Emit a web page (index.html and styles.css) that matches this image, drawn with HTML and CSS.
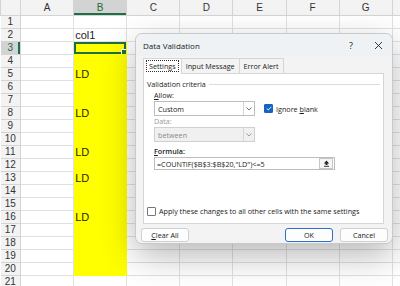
FILE: index.html
```html
<!DOCTYPE html>
<html lang="en">
<head>
  <meta charset="UTF-8">
  <title>Data Validation</title>
  <link rel="stylesheet" href="styles.css">
</head>
<body>
  <div class="sheet">
    <table class="grid" id="grid">
      <thead>
        <tr>
          <th class="corner"></th>
          <th>A</th><th class="sel">B</th><th>C</th><th>D</th><th>E</th><th>F</th><th>G</th><th></th>
        </tr>
      </thead>
      <tbody id="rows"></tbody>
    </table>

    <div class="dialog">
      <div class="titlebar">
        <span class="title">Data Validation</span>
        <span class="help">?</span>
        <span class="close"><svg width="9" height="9" viewBox="0 0 9 9"><path d="M1 1 L8 8 M8 1 L1 8" stroke="#222" stroke-width="0.9"/></svg></span>
      </div>

      <div class="tabs">
        <div class="tab active"><span class="focus">Settings</span></div>
        <div class="tab">Input Message</div>
        <div class="tab">Error Alert</div>
      </div>

      <div class="panel">
        <div class="group">
          <span>Validation criteria</span>
          <div class="rule"></div>
        </div>

        <div class="field">
          <label><u>A</u>llow:</label>
          <div class="row">
            <div class="select">
              <span>Custom</span>
              <span class="arrow"><svg width="6" height="4" viewBox="0 0 6 4"><path d="M0.5 0.5 L3 3 L5.5 0.5" fill="none" stroke="#555" stroke-width="0.8"/></svg></span>
            </div>
            <div class="check on"><svg width="6" height="5" viewBox="0 0 6 5"><path d="M0.7 2.6 L2.3 4 L5.3 0.8" fill="none" stroke="#fff" stroke-width="0.9"/></svg></div>
            <span class="checklabel">Ignore <u>b</u>lank</span>
          </div>
        </div>

        <div class="field">
          <label class="disabled">Data:</label>
          <div class="select disabled">
            <span>between</span>
            <span class="arrow"><svg width="6" height="4" viewBox="0 0 6 4"><path d="M0.5 0.5 L3 3 L5.5 0.5" fill="none" stroke="#888" stroke-width="0.8"/></svg></span>
          </div>
        </div>

        <div class="field">
          <label class="strong"><u>F</u>ormula:</label>
          <div class="input">
            <span>=COUNTIF($B$3:$B$20,"LD")&lt;=5</span>
            <span class="pick"><svg width="7" height="7" viewBox="0 0 7 7"><path d="M3.5 0.6 L6.2 3.4 H4.5 V5 H2.5 V3.4 H0.8 Z" fill="#222"/><rect x="1" y="5.8" width="5" height="0.9" fill="#222"/></svg></span>
          </div>
        </div>

        <div class="apply">
          <div class="check"></div>
          <span>Apply these changes to all other cells with the same settings</span>
        </div>
      </div>

      <div class="buttons">
        <button class="btn"><u>C</u>lear All</button>
        <span class="spacer"></span>
        <button class="btn default">OK</button>
        <button class="btn">Cancel</button>
      </div>
    </div>
  </div>

  <script>
    // filas de la hoja
    const values = { 2: "col1", 5: "LD", 8: "LD", 11: "LD", 13: "LD", 16: "LD" };
    const tbody = document.getElementById("rows");
    for (let r = 1; r <= 21; r++) {
      const tr = document.createElement("tr");
      const th = document.createElement("th");
      th.textContent = r;
      if (r === 3) th.className = "sel";
      tr.appendChild(th);
      for (let c = 0; c < 8; c++) {
        const td = document.createElement("td");
        if (c === 1) {
          if (r >= 3 && r <= 20) td.classList.add("fill");
          if (r === 3) td.classList.add("active");
          if (values[r]) td.textContent = values[r];
        }
        tr.appendChild(td);
      }
      tbody.appendChild(tr);
    }
  </script>
</body>
</html>
```

FILE: styles.css
```css
/* hoja de calculo */
body {
  margin: 0;
  width: 400px;
  height: 286px;
  overflow: hidden;
  background: #ffffff;
  font-family: 'Liberation Sans', Arial, sans-serif;
}

.sheet {
  position: relative;
  width: 400px;
  height: 286px;
  overflow: hidden;
}

.grid {
  border-collapse: collapse;
  table-layout: fixed;
  width: 446px;
}

.grid th,
.grid td {
  padding: 0;
  height: 12px;
  border: 1px solid #e1e1e1;
  overflow: hidden;
  white-space: nowrap;
}

.grid thead th {
  height: 15px;
  background: #f3f3f3;
  border-color: #d4d4d4;
  border-top: none;
  font-size: 10px;
  font-weight: normal;
  color: #333;
  width: 52px;
}

.grid thead th.corner {
  width: 19px;
}

.grid tbody th {
  background: #f3f3f3;
  border-color: #d4d4d4;
  border-left: none;
  font-size: 10px;
  font-weight: normal;
  color: #333;
  text-align: center;
  line-height: 12px;
}

.grid th.sel {
  background: #d3d3d3;
  color: #1d6b3e;
}

.grid thead th.sel {
  box-shadow: inset 0 -2px 0 #1d7044;
}

.grid tbody th.sel {
  box-shadow: inset -2px 0 0 #1d7044;
}

.grid td {
  font-size: 11px;
  color: #222;
  vertical-align: bottom;
  line-height: 11px;
  padding-left: 1px;
}

.grid td.fill {
  background: #ffff00;
  border-color: #ffff00;
  color: #262600;
}

.grid td.active {
  position: relative;
  box-shadow: inset 0 0 0 2px #1d7044;
}

.grid td.active::after {
  content: "";
  position: absolute;
  right: -1px;
  bottom: -1px;
  width: 4px;
  height: 4px;
  background: #1d7044;
  border: 1px solid #fff;
}

/* dialogo */
.dialog {
  position: absolute;
  left: 135px;
  top: 33px;
  width: 256px;
  height: 209px;
  background: #f3f3f3;
  border: 1px solid #c9c9c9;
  border-radius: 7px;
  box-shadow: 0 12px 34px rgba(0, 0, 0, 0.28);
  font-family: 'Open Sans', 'Noto Sans', sans-serif;
  font-size: 7.2px;
  color: #1a1a1a;
  display: flex;
  flex-direction: column;
}

.titlebar {
  height: 22px;
  display: flex;
  align-items: center;
  padding: 0 9px 0 7px;
  background: #eef2f5;
  border-radius: 7px 7px 0 0;
}

.title {
  flex: 1;
  font-size: 8px;
}

.help {
  font-size: 9px;
  margin-right: 21px;
}

.close {
  display: flex;
}

.tabs {
  display: flex;
  padding: 0 7px;
  height: 15px;
  margin-top: 2px;
  position: relative;
  z-index: 1;
}

.tab {
  padding: 0 4px;
  line-height: 14px;
  border: 1px solid #d6d6d6;
  border-bottom: none;
  margin-right: -1px;
}

.tab.active {
  background: #ffffff;
  padding: 0 2px;
  height: 15px;
}

.focus {
  border: 1px dotted #333;
  padding: 0 2px;
}

.panel {
  margin: 0 8px 0 7px;
  height: 145px;
  background: #ffffff;
  border: 1px solid #d6d6d6;
  padding: 4px 3px 0 3px;
  display: flex;
  flex-direction: column;
}

.group {
  display: flex;
  align-items: center;
  gap: 3px;
  height: 12px;
}

.rule {
  flex: 1;
  border-top: 1px solid #dcdcdc;
}

.field {
  padding-left: 7px;
  display: flex;
  flex-direction: column;
  margin-top: 1px;
}

.field label {
  line-height: 9px;
  margin-bottom: 1px;
}

.field label.disabled {
  color: #9a9a9a;
}

.field label.strong {
  font-weight: 600;
}

.row {
  display: flex;
  align-items: center;
}

.select {
  width: 96px;
  height: 13px;
  border: 1px solid #bdbdbd;
  background: #ffffff;
  display: flex;
  align-items: center;
  padding-left: 3px;
  margin-bottom: 4px;
}

.select span:first-child {
  flex: 1;
}

.select .arrow {
  width: 10px;
  height: 13px;
  border-left: 1px solid #d6d6d6;
  display: flex;
  align-items: center;
  justify-content: center;
}

.select.disabled {
  background: #f0f0f0;
  border-color: #cfcfcf;
  color: #8a8a8a;
}

.row .select {
  margin-bottom: 0;
}

.check {
  width: 7px;
  height: 7px;
  border: 1px solid #777;
  border-radius: 1px;
  background: #fff;
  display: flex;
  align-items: center;
  justify-content: center;
}

.check.on {
  background: #1664c0;
  border-color: #1664c0;
  margin-left: 9px;
}

.checklabel {
  margin-left: 3px;
}

.input {
  width: 177px;
  height: 11px;
  border: 1px solid #bdbdbd;
  background: #ffffff;
  display: flex;
  align-items: center;
  padding-left: 2px;
}

.input span:first-child {
  flex: 1;
}

.pick {
  width: 12px;
  height: 9px;
  margin-right: 1px;
  border: 1px solid #c6c6c6;
  background: #f6f6f6;
  display: flex;
  align-items: center;
  justify-content: center;
}

.apply {
  margin-top: auto;
  margin-bottom: 7px;
  display: flex;
  align-items: center;
  gap: 3px;
}

.buttons {
  display: flex;
  padding: 4px 4px 0 5px;
  gap: 7px;
}

.spacer {
  flex: 1;
}

.btn {
  width: 48px;
  height: 14px;
  padding: 0;
  border: 1px solid #d0d0d0;
  border-radius: 3px;
  background: #fdfdfd;
  font-family: inherit;
  font-size: 7.2px;
  color: #1a1a1a;
}

.btn.default {
  border: 1px solid #2a6fc9;
  box-shadow: inset 0 0 0 1px #ffffff;
}
```
